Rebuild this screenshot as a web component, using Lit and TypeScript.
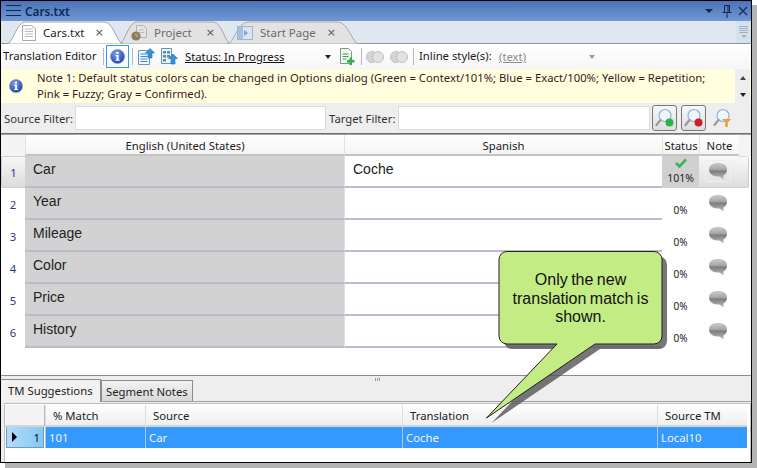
import { LitElement, css, html, svg } from 'lit';
import { customElement } from 'lit/decorators.js';

const infoIcon = (size: number) => html`
  <svg width=${size} height=${size} viewBox="0 0 16 16">
    <defs>
      <radialGradient id="ib" cx="40%" cy="30%" r="75%">
        <stop offset="0" stop-color="#7f9fe8" />
        <stop offset="1" stop-color="#1c3fae" />
      </radialGradient>
    </defs>
    <circle cx="8" cy="8" r="7.5" fill="url(#ib)" stroke="#7a8fc8" stroke-width=".6" />
    <rect x="6.8" y="3" width="2.4" height="2.2" fill="#fff" />
    <path d="M6 6.4h3.2v5H10.4v1.2H5.8v-1.2H7v-3.8H6z" fill="#fff" />
  </svg>
`;

const noteIcon = html`
  <svg class="bubble" width="20" height="18" viewBox="0 0 20 18">
    <defs>
      <linearGradient id="nb" x1="0" y1="0" x2="0" y2="1">
        <stop offset="0" stop-color="#cacaca" />
        <stop offset=".38" stop-color="#a8a8a8" />
        <stop offset=".5" stop-color="#7e7e7e" />
        <stop offset=".8" stop-color="#a6a6a6" />
        <stop offset="1" stop-color="#bcbcbc" />
      </linearGradient>
    </defs>
    <path d="M10 1C16 1 19 3.500 19 7.500C19 10.500 17.500 12.500 15.500 13.500L15.500 17.500L11.500 14.500C5 14.800 1 12 1 7.500C1 3.500 4 1 10 1z" fill="url(#nb)" />
  </svg>
`;

const pageIcon = html`
  <svg width="14" height="16" viewBox="0 0 14 16">
    <path d="M.5.5h9l4 3v12H.5z" fill="#fff" stroke="#a8a8a8" />
    <path d="M3 4h8M3 6.500h8M3 9h8M3 11.500h8" stroke="#bbb" />
  </svg>
`;

const projectIcon = html`
  <svg width="16" height="16" viewBox="0 0 16 16">
    <path d="M5.500.5h7l3 3v9h-10z" fill="#e4e4e4" stroke="#b4b4b4" />
    <path d="M8 5h5M8 7.500h5" stroke="#bbb" />
    <circle cx="5" cy="11" r="4.600" fill="#8a7d66" />
    <path d="M5 8.500V11H7.200" stroke="#e6c45c" fill="none" />
  </svg>
`;

const startIcon = html`
  <svg width="16" height="14" viewBox="0 0 16 14">
    <rect x=".5" y=".5" width="15" height="13" fill="#dbe5ef" stroke="#a8b4c2" />
    <rect x="1" y="1" width="5" height="12" fill="#9fc3e4" />
    <path d="M7 4l4 3-4 3z" fill="#7ba6cf" />
  </svg>
`;

const upDocIcon = html`
  <svg width="17" height="17" viewBox="0 0 17 17">
    <path d="M.5 2.500h11v14H.5z" fill="#f2f6fb" stroke="#6e93b8" />
    <path d="M2.500 6h7M2.500 8.500h7M2.500 11h7M2.500 13.500h7" stroke="#3f86cc" />
    <path d="M12 .5L16.500 5H14v5h-4V5H7.500z" fill="#2f93dd" stroke="#1d6eae" stroke-width=".6" />
  </svg>
`;

const upListIcon = html`
  <svg width="17" height="17" viewBox="0 0 17 17">
    <path d="M.5.5h10v15H.5z" fill="#eef3f9" stroke="#6e8eaa" />
    <path d="M2 3h3v2.500H2zM6 3h3v2.500H6zM2 7h3v2.500H2zM6 7h3v2.500H6zM2 11h3v2.500H2z" fill="#4f8bc4" />
    <path d="M12 6l4.500 4.500H14V16h-4v-5.500H7.500z" fill="#2f93dd" stroke="#1d6eae" stroke-width=".6" />
  </svg>
`;

const addDocIcon = html`
  <svg width="15" height="18" viewBox="0 0 15 18">
    <path d="M.5.5h8l3 3v12H.5z" fill="#f4f8f2" stroke="#7f9a86" />
    <path d="M2.500 6h6M2.500 8.500h6M2.500 11h4" stroke="#3d9b5a" />
    <path d="M9.500 9.500h2.500v2.500h2.500v2.500H12v2.500H9.500V14.500H7V12h2.500z" fill="#2fb04a" />
  </svg>
`;

const toggleIcon = html`
  <svg width="18" height="12" viewBox="0 0 18 12">
    <circle cx="6" cy="6" r="5.500" fill="#d4d4d4" stroke="#c4c4c4" />
    <circle cx="12" cy="6" r="5.500" fill="#e2e2e2" stroke="#c0c0c0" />
  </svg>
`;

const lensIcon = (dot: string, filter = false) => html`
  <svg width="20" height="20" viewBox="0 0 20 20">
    <circle cx="10" cy="7.500" r="6" fill="#eef6fd" stroke="#8db4dc" stroke-width="1.200" />
    <path d="M5.500 12L1.500 17" stroke="#9a9a9a" stroke-width="2.200" stroke-linecap="round" />
    ${filter
      ? svg`<path d="M9 11h9l-3.200 3.500v4.500h-2.600v-4.500z" fill="#e8a23c" />`
      : svg`<circle cx="14.500" cy="14.500" r="4" fill=${dot} />`}
  </svg>
`;

const tabShape = (fill: string, stroke: string) => html`
  <svg class="tab-shape" viewBox="0 0 100 23" preserveAspectRatio="none">
    <path
      d="M0 23C5 23 8 1 16 1H84C92 1 95 23 100 23Z"
      fill=${fill}
      stroke=${stroke}
      vector-effect="non-scaling-stroke"
    />
  </svg>
`;

const segments = [
  { n: 1, source: 'Car', target: 'Coche', status: '101%', active: true },
  { n: 2, source: 'Year', target: '', status: '0%', active: false },
  { n: 3, source: 'Mileage', target: '', status: '0%', active: false },
  { n: 4, source: 'Color', target: '', status: '0%', active: false },
  { n: 5, source: 'Price', target: '', status: '0%', active: false },
  { n: 6, source: 'History', target: '', status: '0%', active: false },
];

@customElement('app-root')
export class AppRoot extends LitElement {
  static styles = css`
    :host {
      display: block;
      position: relative;
      width: 757px;
      height: 468px;
      background: #fff;
      overflow: hidden;
      font-family: 'Noto Sans', 'Open Sans', sans-serif;
      font-size: 11.3px;
      color: #1a1a1a;
    }
    .window {
      box-sizing: border-box;
      width: 752px;
      height: 463px;
      border: 1px solid #000;
      box-shadow: 5px 5px 0 #b4b4b4;
      display: flex;
      flex-direction: column;
      background: #fff;
    }
    .title {
      height: 20px;
      display: flex;
      align-items: center;
      padding: 0 3px 0 5px;
      background: linear-gradient(#4a74b6, #7197d4);
      color: #0d2a58;
      font-size: 11.8px;
      font-weight: 600;
    }
    .title .name {
      flex: 1;
      margin-left: 3px;
    }
    .title svg {
      display: block;
    }
    .tabs {
      height: 23px;
      box-sizing: border-box;
      display: flex;
      align-items: flex-end;
      padding-left: 6px;
      background: #dfe7f1;
      border-bottom: 1px solid #8d97a3;
    }
    .tab {
      position: relative;
      height: 23px;
      display: flex;
      align-items: center;
      box-sizing: border-box;
      margin-bottom: -1px;
      margin-right: -4px;
      color: #6b6b6b;
      font-size: 11.5px;
    }
    .tab.active {
      color: #222;
      z-index: 2;
    }
    .tab-shape {
      position: absolute;
      inset: 0;
      width: 100%;
      height: 100%;
    }
    .tab > *:not(.tab-shape) {
      position: relative;
    }
    .tab .label {
      flex: 1;
    }
    .tab .x {
      font-size: 11px;
      color: #555;
      font-family: 'DejaVu Sans', sans-serif;
    }
    .overflow {
      margin-left: auto;
      width: 15px;
      height: 22px;
      background: #d5e2ee;
      display: flex;
      flex-direction: column;
      align-items: center;
      justify-content: center;
      gap: 1px;
    }
    .overflow i {
      display: block;
      width: 9px;
      height: 1px;
      background: #a4b1c0;
    }
    .overflow b {
      display: block;
      margin-top: 1px;
      border: 3px solid transparent;
      border-top: 3px solid #a4b1c0;
      border-bottom: 0;
    }
    .toolbar {
      height: 25px;
      display: flex;
      align-items: center;
      padding-left: 2px;
      background: linear-gradient(#fff, #f6f6f6);
      white-space: nowrap;
    }
    .lbl {
      padding-bottom: 2px;
    }
    .sep {
      width: 1px;
      height: 17px;
      background: #b8b8b8;
      flex: none;
    }
    .toolbar .tool {
      display: flex;
      flex: none;
    }
    .toolbar .info-btn {
      box-sizing: border-box;
      width: 23px;
      height: 23px;
      border: 1px solid #3399ff;
      align-items: center;
      justify-content: center;
      margin: 0 3px 0 2px;
    }
    .status-link {
      width: 140px;
      margin-left: 7px;
      text-decoration: underline;
      color: #111;
    }
    .arrow {
      flex: none;
      width: 0;
      height: 0;
      border: 3px solid transparent;
      border-top: 4px solid #222;
      border-bottom: 0;
    }
    .arrow.dim {
      border-top-color: #9a9a9a;
    }
    .muted-link {
      color: #8b8b8b;
      text-decoration: underline;
      width: 90px;
      margin-left: 9px;
    }
    .note {
      height: 34px;
      display: flex;
      background: #ffffe0;
      color: #3a1a22;
      line-height: 15.5px;
    }
    .note .ic {
      width: 36px;
      flex: none;
      display: flex;
      align-items: center;
      padding-left: 8px;
      box-sizing: border-box;
    }
    .note .txt {
      flex: 1;
      padding-top: 1px;
      white-space: nowrap;
    }
    .note .scroll {
      width: 15px;
      margin-right: 1px;
      background: #eee;
      display: flex;
      flex-direction: column;
      align-items: center;
      justify-content: space-around;
    }
    .arrow.up {
      border: 3px solid transparent;
      border-bottom: 4px solid #444;
      border-top: 0;
    }
    .filter {
      height: 30px;
      display: flex;
      align-items: center;
      background: #eee;
      padding-left: 3px;
      white-space: nowrap;
      color: #333;
    }
    .filter .box {
      box-sizing: border-box;
      height: 24px;
      background: #fff;
      border: 1px solid #dcdcdc;
      flex: none;
    }
    .lens-btn {
      box-sizing: border-box;
      width: 25px;
      height: 26px;
      border: 1px solid #777;
      border-radius: 3px;
      background: linear-gradient(#f8f8f8, #dedede);
      display: flex;
      align-items: center;
      justify-content: center;
      flex: none;
    }
    .rule {
      height: 2px;
      background: linear-gradient(#555, #bbb);
      flex: none;
    }
    .grid {
      display: grid;
      grid-template-columns: 24px 319px 318px 37px 40px 12px;
    }
    .head {
      height: 21px;
      border-bottom: 2px solid #c4c4c4;
      box-sizing: border-box;
      background: linear-gradient(#fff, #f4f4f4);
      border-left: 1px solid #e2e2e2;
      display: flex;
      align-items: center;
      justify-content: center;
      color: #222;
      padding-top: 1px;
    }
    .head.blank {
      background: #f4f4f4;
      border-bottom-color: #f4f4f4;
      border-left: 0;
    }
    .num {
      height: 32px;
      box-sizing: border-box;
      display: flex;
      align-items: center;
      justify-content: center;
      color: #2b3a78;
      padding-top: 1px;
    }
    .num.on {
      background: linear-gradient(#f6f6f6, #dcdcdc);
      border: 1px solid #cfcfcf;
      border-right: 0;
      border-radius: 2px 0 0 2px;
    }
    .src,
    .tgt {
      height: 32px;
      box-sizing: border-box;
      border-bottom: 2px solid #b8bdc9;
      font-family: 'Liberation Sans', Arial, sans-serif;
      font-size: 14px;
      padding: 5px 0 0 8px;
      color: #222;
    }
    .src {
      background: #d2d2d2;
    }
    .tgt {
      border-left: 1px solid #dde1e8;
    }
    .stat {
      height: 32px;
      box-sizing: border-box;
      display: flex;
      flex-direction: column;
      align-items: center;
      justify-content: flex-end;
      font-size: 10px;
      color: #222;
      padding-bottom: 3px;
    }
    .stat.on {
      background: #d0d0d0;
      justify-content: space-between;
      padding-top: 2px;
      font-size: 10.5px;
    }
    .nt {
      height: 32px;
      box-sizing: border-box;
      padding: 6px 0 0 9px;
    }
    .nt.on,
    .pad.on {
      background: linear-gradient(#f8f8f8, #dedede);
      border-bottom: 1px solid #ccc;
    }
    .pad.on {
      margin-right: 2px;
      border-right: 1px solid #ccc;
      border-top: 1px solid #ddd;
      border-radius: 0 2px 2px 0;
    }
    .nt .frame {
      display: inline-flex;
      margin: -2px 0 0 -3px;
      padding: 1px 2px;
      border: 1px solid #efefef;
      border-radius: 2px;
    }
    .spacer {
      height: 27px;
      flex: none;
    }
    .panel {
      flex: 1;
      min-height: 0;
      display: flex;
      flex-direction: column;
      position: relative;
      border-top: 1px solid #8c8c8c;
      background: #eee;
    }
    .grip {
      position: absolute;
      top: 2px;
      left: 374px;
      width: 5px;
      height: 3px;
      background: repeating-linear-gradient(90deg, #999 0 1px, transparent 1px 2px);
    }
    .ptabs {
      height: 26px;
      flex: none;
      display: flex;
      align-items: flex-end;
      box-sizing: border-box;
      border-bottom: 1px solid #a0a0a0;
    }
    .ptab {
      box-sizing: border-box;
      height: 21px;
      display: flex;
      align-items: center;
      padding: 0 4px;
      border: 1px solid #8c8c8c;
      border-bottom: 0;
      background: linear-gradient(#f2f2f2, #d8d8d8);
      color: #222;
      margin-bottom: 0;
    }
    .ptab.on {
      height: 23px;
      width: 100px;
      padding: 0 0 2px 7px;
      background: #f2f2f2;
      margin-bottom: -1px;
      border-left: 0;
      position: relative;
    }
    .tm {
      flex: 1;
      min-height: 0;
      margin: 1px 0 0 3px;
      border: 1px solid #c0c0c0;
      border-bottom: 0;
      background: #fff;
      padding: 1px 2px 0 0;
      display: grid;
      grid-template-columns: 40px 100px 257px 255px 90px;
      grid-template-rows: 22px 21px;
      align-content: start;
    }
    .th {
      display: flex;
      align-items: center;
      background: linear-gradient(#fff, #eee);
      border-bottom: 2px solid #d4d4d4;
      border-left: 1px solid #ddd;
      padding-left: 7px;
      color: #222;
    }
    .th.corner {
      background: #f4f4f4;
      border-left: 0;
      border-right: 1px solid #bbb;
    }
    .td {
      display: flex;
      align-items: center;
      background: #3399ff;
      color: #f2f2f2;
      padding-left: 3px;
      border-left: 1px solid #a8c8e6;
    }
    .rowhead {
      box-sizing: border-box;
      margin: 0 1px;
      display: flex;
      align-items: center;
      justify-content: space-between;
      padding: 0 3px 0 5px;
      background: linear-gradient(90deg, #b4dcf8, #84c8f4);
      border: 1px solid #6c9cbc;
      border-top: 0;
      color: #111;
    }
    .tri {
      width: 0;
      height: 0;
      border: 5px solid transparent;
      border-left: 5px solid #000;
      border-right: 0;
    }
    .callout {
      position: absolute;
      left: 480px;
      top: 245px;
      width: 200px;
      height: 185px;
    }
    .callout svg {
      position: absolute;
      inset: 0;
    }
    .callout .words {
      position: absolute;
      left: 19px;
      top: 26px;
      width: 163px;
      text-align: center;
      font-family: 'Liberation Sans', Arial, sans-serif;
      font-size: 16px;
      word-spacing: -1px;
      line-height: 18.5px;
      color: #111;
    }
  `;

  render() {
    const bubble =
      'M27 6.500H174a8 8 0 0 1 8 8V91a8 8 0 0 1-8 8H115L6.500 173L77 99H27a8 8 0 0 1-8-8V14.500a8 8 0 0 1 8-8Z';
    return html`
      <div class="window">
        <div class="title">
          <svg width="16" height="14" viewBox="0 0 16 14">
            <path d="M0 1.500h15M0 6.500h15M0 11.500h15" stroke="#12264e" stroke-width="1.200" />
          </svg>
          <span class="name">Cars.txt</span>
          <span class="arrow" style="border-width:4px 4px 0;border-top-color:#12264e"></span>
          <svg style="margin-left:8px" width="12" height="14" viewBox="0 0 12 14">
            <path d="M3.500 1.500h5v7h-5zM1.500 8.500h9M6 9v5M7 2v6" stroke="#12264e" fill="none" />
          </svg>
          <svg style="margin-left:5px" width="10" height="10" viewBox="0 0 10 10">
            <path d="M1 1l8 8M9 1L1 9" stroke="#1c3563" stroke-width="1.600" />
          </svg>
        </div>

        <div class="tabs">
          <div class="tab active" style="width:116px">
            ${tabShape('#fff', '#a0a7b0')}
            <span style="margin:0 7px 0 15px;display:flex">${pageIcon}</span>
            <span class="label">Cars.txt</span>
            <span class="x" style="margin-right:19px">×</span>
          </div>
          <div class="tab" style="width:112px">
            ${tabShape('#e2e2e2', '#a8a8a8')}
            <span style="margin:0 7px 0 12px;display:flex">${projectIcon}</span>
            <span class="label">Project</span>
            <span class="x" style="margin-right:16px">×</span>
          </div>
          <div class="tab" style="width:132px">
            ${tabShape('#e2e2e2', '#a8a8a8')}
            <span style="margin:0 7px 0 10px;display:flex">${startIcon}</span>
            <span class="label">Start Page</span>
            <span class="x" style="margin-right:23px">×</span>
          </div>
          <div class="overflow"><i></i><i></i><i></i><i></i><b></b></div>
        </div>

        <div class="toolbar">
          <span class="lbl" style="width:100px">Translation Editor</span>
          <span class="sep"></span>
          <span class="tool info-btn">${infoIcon(15)}</span>
          <span class="sep"></span>
          <span class="tool" style="margin-left:5px">${upDocIcon}</span>
          <span class="tool" style="margin-left:6px">${upListIcon}</span>
          <span class="status-link">Status: In Progress</span>
          <span class="arrow"></span>
          <span class="tool" style="margin-left:9px">${addDocIcon}</span>
          <span class="sep" style="margin-left:6px"></span>
          <span class="tool" style="margin-left:4px">${toggleIcon}</span>
          <span class="tool" style="margin-left:6px">${toggleIcon}</span>
          <span class="sep" style="margin:0 5px"></span>
          <span class="lbl" style="width:71px">Inline style(s):</span>
          <span class="muted-link">(text)</span>
          <span class="arrow dim"></span>
        </div>

        <div class="note">
          <div class="ic">${infoIcon(14)}</div>
          <div class="txt">
            Note 1: Default status colors can be changed in Options dialog (Green = Context/101%;
            Blue = Exact/100%; Yellow = Repetition;<br />Pink = Fuzzy; Gray = Confirmed).
          </div>
          <div class="scroll"><span class="arrow up"></span><span class="arrow"></span></div>
        </div>

        <div class="filter">
          <span style="width:71px">Source Filter:</span>
          <span class="box" style="width:251px"></span>
          <span style="width:69px;margin-left:3px">Target Filter:</span>
          <span class="box" style="width:252px"></span>
          <span class="lens-btn" style="margin-left:2px">${lensIcon('#2fb04a')}</span>
          <span class="lens-btn" style="margin-left:4px">${lensIcon('#c8202c')}</span>
          <span style="margin-left:7px;display:flex">${lensIcon('', true)}</span>
        </div>
        <div class="rule"></div>

        <div class="grid">
          <div class="head blank"></div>
          <div class="head">English (United States)</div>
          <div class="head">Spanish</div>
          <div class="head">Status</div>
          <div class="head">Note</div>
          <div class="head blank"></div>
          ${segments.map(
            s => html`
              <div class="num ${s.active ? 'on' : ''}">${s.n}</div>
              <div class="src">${s.source}</div>
              <div class="tgt">${s.target}</div>
              <div class="stat ${s.active ? 'on' : ''}">
                ${s.active
                  ? html`<svg width="12" height="10" viewBox="0 0 12 10">
                      <path d="M1 5l3.500 3.500L11 1.500" stroke="#3db45a" stroke-width="2.600" fill="none" />
                    </svg>`
                  : ''}
                <span>${s.status}</span>
              </div>
              <div class="nt ${s.active ? 'on' : ''}">
                ${s.active ? html`<span class="frame">${noteIcon}</span>` : noteIcon}
              </div>
              <div class="pad ${s.active ? 'on' : ''}"></div>
            `,
          )}
        </div>
        <div class="spacer"></div>

        <div class="panel">
          <div class="grip"></div>
          <div class="ptabs">
            <div class="ptab on">TM Suggestions</div>
            <div class="ptab">Segment Notes</div>
          </div>
          <div class="tm">
            <div class="th corner"></div>
            <div class="th">% Match</div>
            <div class="th">Source</div>
            <div class="th">Translation</div>
            <div class="th">Source TM</div>
            <div class="rowhead"><span class="tri"></span><span>1</span></div>
            <div class="td">101</div>
            <div class="td">Car</div>
            <div class="td">Coche</div>
            <div class="td">Local10</div>
          </div>
        </div>
      </div>

      <div class="callout">
        <svg width="200" height="185" viewBox="0 0 200 185">
          <path d=${bubble} transform="translate(5 5)" fill="#555" fill-opacity=".8" />
          <path d=${bubble} fill="#c3ec85" stroke="#222" />
        </svg>
        <div class="words">Only the new<br />translation match is<br />shown.</div>
      </div>
    `;
  }
}
